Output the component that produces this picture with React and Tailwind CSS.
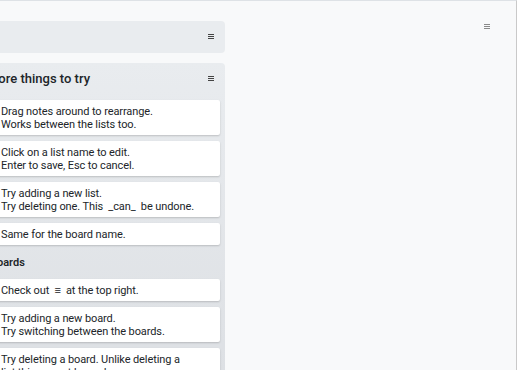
const Card = ({ children }) => (
  <div className="bg-white rounded-[2px] pl-[8px] pr-2 py-[4.5px] leading-[13px] text-[11px] tracking-[-0.1px] text-[#212529] shadow-[0_1px_2px_rgba(0,0,0,0.18)]">
    {children}
  </div>
)

const Menu = ({ color = '#444' }) => (
  <svg width="6" height="6" viewBox="0 0 6 6" className="block">
    <path d="M0 0.5h6M0 2.5h6M0 4.5h6" stroke={color} strokeWidth="1" />
  </svg>
)

export default function App() {
  return (
    <div
      className="h-[370px] w-[517px] overflow-hidden bg-[#f8f9fa] border-t border-r border-t-[#dee2e6] border-r-[#c9c9c9] relative"
      style={{ fontFamily: 'Roboto, "Noto Sans", sans-serif' }}
    >
      <div className="absolute left-[484px] top-[23px]">
        <Menu color="#8a8a8a" />
      </div>

      <div className="flex flex-col gap-[10px] ml-[-12px] mt-[20px] w-[237px]">
        {/* empty list */}
        <div className="h-[32px] rounded-[4px] bg-[#e9ecef] flex items-center justify-end pr-[11px]">
          <Menu />
        </div>

        {/* more things to try */}
        <div className="rounded-[4px] bg-gradient-to-b from-[#e9ecef] to-[#dcdfe3] px-[5px] pb-4">
          <div className="flex items-center justify-between h-[37px] pb-[5px] pr-[6px]">
            <span className="ml-[-6px] text-[13px] font-medium text-[#212529]">More things to try</span>
            <Menu />
          </div>
          <div className="flex flex-col gap-[6px]">
            <Card>
              Drag notes around to rearrange.
              <br />
              Works between the lists too.
            </Card>
            <Card>
              Click on a list name to edit.
              <br />
              Enter to save, Esc to cancel.
            </Card>
            <Card>
              Try adding a new list.
              <br />
              Try deleting one. This &nbsp;_can_&nbsp; be undone.
            </Card>
            <Card>Same for the board name.</Card>
          </div>
          <div className="h-[34px] flex items-center pt-[3px] ml-[-3px] text-[11px] font-semibold text-[#212529]">
            Boards
          </div>
          <div className="flex flex-col gap-[6px]">
            <Card>
              Check out &nbsp;≡&nbsp; at the top right.
            </Card>
            <Card>
              Try adding a new board.
              <br />
              Try switching between the boards.
            </Card>
            <Card>
              Try deleting a board. Unlike deleting a
              <br />
              list this cannot be undone.
            </Card>
          </div>
        </div>
      </div>
    </div>
  )
}
